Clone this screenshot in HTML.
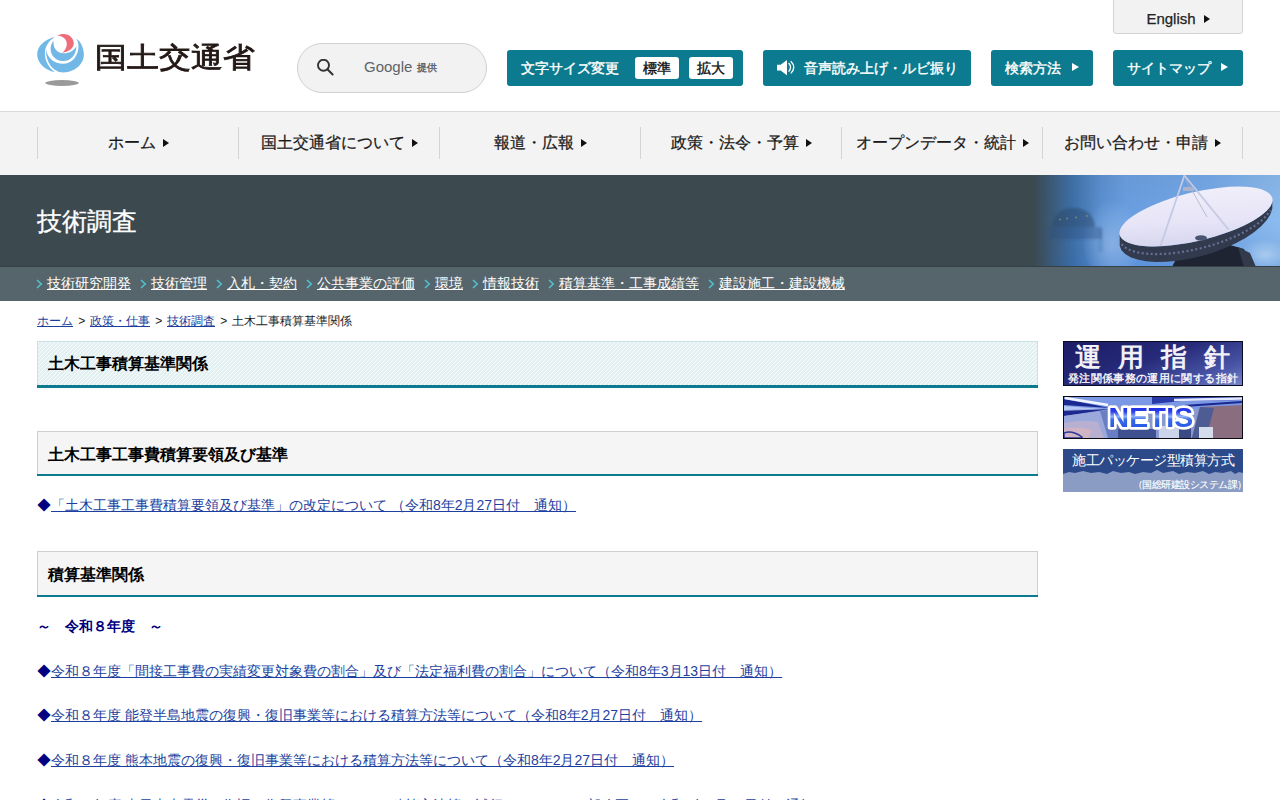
<!DOCTYPE html>
<html lang="ja">
<head>
<meta charset="utf-8">
<title>土木工事積算基準関係 - 国土交通省</title>
<style>
*{box-sizing:border-box;margin:0;padding:0}
html,body{width:1280px;height:800px;overflow:hidden;background:#fff}
body{font-family:"Liberation Sans",sans-serif;color:#1a1a1a;position:relative}
a{color:inherit}
.abs{position:absolute}
/* header */
#hdr{position:absolute;left:0;top:0;width:1280px;height:112px;background:#fff;border-bottom:1px solid #d9d9d9}
#logo{position:absolute}
#logotext{position:absolute;left:95px;top:36px;font-size:32px;line-height:42px;transform:scaleY(0.88);transform-origin:0 20.5px;color:#231815;letter-spacing:0px;white-space:nowrap;-webkit-text-stroke:0.9px #231815}
#search{position:absolute;left:297px;top:43px;width:190px;height:50px;border:1px solid #d0d0d0;border-radius:25px;background:#f2f2f2}
#search .g{position:absolute;left:66px;top:14px;font-size:15px;color:#5f6368;line-height:18px}
#search .t{position:absolute;left:119px;top:18px;font-size:10px;color:#5f6368;line-height:12px;font-weight:bold}
.btn{position:absolute;top:50px;height:36px;background:#0c7b8f;border-radius:3px;color:#fff;font-size:14px;line-height:36px;white-space:nowrap;-webkit-text-stroke:0.4px #fff}
.btn .tri{display:block;width:0;height:0;border-left:7px solid #fff;border-top:4.5px solid transparent;border-bottom:4.5px solid transparent}
.wbox{position:absolute;top:7px;width:44px;height:22px;background:#fff;border-radius:3px;color:#111;font-size:14px;line-height:22px;text-align:center;-webkit-text-stroke:0.4px #111}
#eng{position:absolute;left:1113px;top:-2px;width:130px;height:36px;background:#f2f2f2;border:1px solid #d3d3d3;border-radius:0 0 3px 3px;font-size:15px;line-height:40px;color:#222;text-align:center;-webkit-text-stroke:0.25px #222}
#eng .tri{display:inline-block;width:0;height:0;border-left:6px solid #111;border-top:4px solid transparent;border-bottom:4px solid transparent;vertical-align:middle;margin-left:8px;margin-top:-2px}
/* nav */
#nav{position:absolute;left:0;top:112px;width:1280px;height:63px;background:#f3f3f3}
.sep{position:absolute;top:15px;width:1px;height:32px;background:#d4d4d4}
.ni{position:absolute;top:0;height:63px;line-height:61px;font-size:16px;color:#1a1a1a;text-align:center;white-space:nowrap;-webkit-text-stroke:0.25px #1a1a1a}
.ni .tri{display:inline-block;width:0;height:0;border-left:6px solid #111;border-top:4px solid transparent;border-bottom:4px solid transparent;vertical-align:middle;margin-left:7px;margin-top:-2px}
/* banner */
#ban{position:absolute;left:0;top:175px;width:1280px;height:92px;background:#3c494f;overflow:hidden}
#ban h2{position:absolute;left:37px;top:29px;font-size:25px;line-height:34px;color:#fff;font-weight:normal;-webkit-text-stroke:0.3px #fff}
#sub{position:absolute;left:0;top:267px;width:1280px;height:34px;background:#56656b;white-space:nowrap;padding-left:37px;display:flex}
#sub .si{display:block;font-size:14px;line-height:32px;color:#fff;margin-right:10px;position:relative;padding-left:10px}
#sub .si a{text-decoration:underline}
#sub .chev{position:absolute;left:-0.7px;top:12px}
/* breadcrumb */
#bc{position:absolute;left:37px;top:312px;font-size:12px;line-height:18px;color:#222;white-space:nowrap}
#bc a{color:#1b3e9a;text-decoration:underline}
#bc .gt{display:inline-block;margin:0 4.8px 0 5.2px}
/* content */
.h1box{position:absolute;left:37px;top:341px;width:1001px;height:47px;border:1px solid #c9e2e6;border-bottom:3px solid #0c7b8f;border-image:none;
 background-color:#e2f0f2;background-image:linear-gradient(135deg,#fbfdfd 0,#fbfdfd 15%,#e2f0f2 15%,#e2f0f2 50%,#fbfdfd 50%,#fbfdfd 65%,#e2f0f2 65%,#e2f0f2 100%);background-size:4px 4px}
.h1box h1{position:absolute;left:10px;top:12px;font-size:16px;line-height:20px;font-weight:bold;color:#000}
.h1box::after,.h2box::after{content:"";position:absolute;left:-1px;width:1001px;bottom:-3px;height:3px;background:#0c7b8f}
.h2box::after{bottom:-2px;height:2px}
.h2box{position:absolute;left:37px;width:1001px;height:45px;border:1px solid #cfcfcf;border-bottom:2px solid #0c7b8f;background:#f5f5f5}
.h2box h2{position:absolute;left:10px;top:13px;font-size:16px;line-height:20px;font-weight:bold;color:#000}
.lk{position:absolute;left:37px;font-size:14px;line-height:18px;white-space:nowrap;color:#000080}
.lk a{color:#1d3fa0;text-decoration:underline}
#yr{position:absolute;left:37px;top:617px;font-size:14px;line-height:18px;font-weight:bold;color:#000080;white-space:pre}
/* sidebar */
.sb{position:absolute;left:1063px;width:180px;overflow:hidden}
</style>
</head>
<body>
<div id="hdr">
  <svg id="logo" viewBox="0 0 52 58" width="52" height="58" style="left:35px;top:32px">
    <g fill="#72b8e6">
    <path d="M19.9,5.1 C10,7.5 2.1,14 2.15,22.6 C2.2,31 10,38.5 19.9,40.3 C13.5,35.5 9.9,28.5 9.9,21.8 C9.9,14.5 14,8.5 19.9,5.1 Z"/>
    <path d="M11,17.2 C10.6,30 18,40.4 28.5,40.4 C40,40.4 48.9,32 48.9,22.6 C48.9,15.5 45.5,9.5 41.4,6.8 C43.3,10 44,14 43.2,18 C41.5,26 35.5,31.8 28.5,31.8 C19,31.8 12,25.5 11,17.2 Z"/>
    <path d="M18.3,8.9 C15.8,12 15.2,16 15.8,19.2 C17.3,25.5 22.5,29.1 28.5,29.1 C35.8,29.1 41.5,22.5 41.4,14 C39.3,18.7 34,21.4 28.5,21.3 C22.5,21.1 18.6,16.5 18.7,12 C18.7,11 18.6,10 18.3,8.9 Z"/>
    </g>
    <path fill="#ef6d78" d="M22,3.6 C24,2.5 26.3,1.9 28.6,1.9 C34.2,1.9 38.8,6.1 38.8,11.3 C38.8,16.3 33.3,20.4 27,20.7 C29.8,19 31.8,15.5 31.8,11.9 C31.8,7.2 27.6,3.7 22,3.6 Z"/>
    <ellipse cx="27" cy="51" rx="16.8" ry="2.9" fill="#9a9a9a"/>
  </svg>
  <div id="logotext">国土交通省</div>
  <div id="search">
    <svg class="abs" style="left:19px;top:15px" width="19" height="19" viewBox="0 0 19 19"><circle cx="6.5" cy="6.3" r="5.5" fill="none" stroke="#333" stroke-width="1.9"/><line x1="10.4" y1="10.2" x2="15.6" y2="15.5" stroke="#333" stroke-width="2" stroke-linecap="round"/></svg>
    <span class="g">Google</span><span class="t">提供</span>
  </div>
  <div class="btn" style="left:507px;width:236px"><span style="position:absolute;left:14px">文字サイズ変更</span><span class="wbox" style="left:128px">標準</span><span class="wbox" style="left:182px">拡大</span></div>
  <div class="btn" style="left:763px;width:208px"><svg class="abs" style="left:14px;top:10px" width="20" height="16" viewBox="0 0 20 16"><path d="M0 4.8 H3.6 L10 0 V15.2 L3.6 10.6 H0 Z" fill="#fff"/><path d="M11.6 3 Q15.6 7.3 11.6 11.6" fill="none" stroke="#fff" stroke-width="1.3"/><path d="M13.8 1.2 Q19.8 7.3 13.8 13.4" fill="none" stroke="#fff" stroke-width="1.3"/></svg><span style="position:absolute;left:41px">音声読み上げ・ルビ振り</span></div>
  <div class="btn" style="left:991px;width:102px"><span style="position:absolute;left:14px">検索方法</span><span class="tri" style="position:absolute;left:81px;top:13px;margin:0"></span></div>
  <div class="btn" style="left:1113px;width:130px"><span style="position:absolute;left:14px">サイトマップ</span><span class="tri" style="position:absolute;left:108px;top:13px;margin:0"></span></div>
  <div id="eng">English<span class="tri"></span></div>
</div>
<div id="nav">
  <div class="sep" style="left:37px"></div><div class="sep" style="left:238px"></div><div class="sep" style="left:439px"></div><div class="sep" style="left:640px"></div><div class="sep" style="left:841px"></div><div class="sep" style="left:1042px"></div><div class="sep" style="left:1242px"></div>
  <div class="ni" style="left:38px;width:200px">ホーム<span class="tri"></span></div>
  <div class="ni" style="left:239px;width:200px">国土交通省について<span class="tri"></span></div>
  <div class="ni" style="left:440px;width:200px">報道・広報<span class="tri"></span></div>
  <div class="ni" style="left:641px;width:200px">政策・法令・予算<span class="tri"></span></div>
  <div class="ni" style="left:842px;width:200px">オープンデータ・統計<span class="tri"></span></div>
  <div class="ni" style="left:1043px;width:199px">お問い合わせ・申請<span class="tri"></span></div>
</div>
<div id="ban">
  <svg class="abs" style="left:1000px;top:0" width="280" height="92" viewBox="0 0 280 92">
    <defs>
      <linearGradient id="sky" x1="0" y1="0" x2="1" y2="0">
        <stop offset="0" stop-color="#3c494f"/>
        <stop offset="0.12" stop-color="#3c494f"/>
        <stop offset="0.19" stop-color="#3b5c7c"/>
        <stop offset="0.26" stop-color="#3d6fa6"/>
        <stop offset="0.36" stop-color="#5a90d2"/>
        <stop offset="0.45" stop-color="#6a9fe2"/>
        <stop offset="0.75" stop-color="#74aaea"/>
        <stop offset="1" stop-color="#8cbcf0"/>
      </linearGradient>
      <linearGradient id="dish" x1="0" y1="1" x2="0.6" y2="0">
        <stop offset="0" stop-color="#cfd0ea"/>
        <stop offset="0.5" stop-color="#e6e4f6"/>
        <stop offset="1" stop-color="#f0eefa"/>
      </linearGradient>
    </defs>
    <rect x="0" y="0" width="280" height="92" fill="url(#sky)"/>
    <linearGradient id="mk" x1="0" y1="0" x2="1" y2="0"><stop offset="0.15" stop-color="#fff" stop-opacity="0"/><stop offset="0.35" stop-color="#fff" stop-opacity="1"/></linearGradient>
    <mask id="mask1"><rect x="0" y="0" width="280" height="92" fill="url(#mk)"/></mask>
    <linearGradient id="vg" x1="0" y1="0" x2="0" y2="1"><stop offset="0" stop-color="#5a6a88" stop-opacity="0.12"/><stop offset="0.5" stop-color="#5a6a88" stop-opacity="0"/><stop offset="1" stop-color="#1a5ab8" stop-opacity="0.2"/></linearGradient>
    <rect x="0" y="0" width="280" height="92" fill="url(#vg)" mask="url(#mask1)"/>
    <radialGradient id="haze" cx="0.5" cy="0.6" r="0.5"><stop offset="0" stop-color="#a8c8f0" stop-opacity="0.55"/><stop offset="1" stop-color="#a8c8f0" stop-opacity="0"/></radialGradient>
    <ellipse cx="112" cy="60" rx="30" ry="45" fill="url(#haze)"/>
    <radialGradient id="cloud" cx="0.5" cy="0.5" r="0.5"><stop offset="0" stop-color="#c8def6" stop-opacity="0.6"/><stop offset="1" stop-color="#c8def6" stop-opacity="0"/></radialGradient>
    <ellipse cx="265" cy="80" rx="25" ry="16" fill="url(#cloud)"/>
    <filter id="bl"><feGaussianBlur stdDeviation="1.2"/></filter>
    <g filter="url(#bl)"><path d="M52 52 Q54 33 73.5 33 Q93 33 95 52 Z" fill="#2a4668" opacity="0.5"/>
    <rect x="50" y="52" width="52" height="12" fill="#2a4a78" opacity="0.35"/>
    <rect x="98" y="55" width="5" height="22" fill="#3a6aa8" opacity="0.25"/></g>
    <g fill="#c8b070" opacity="0.5"><circle cx="60" cy="44.5" r="0.9"/><circle cx="67" cy="43.5" r="0.9"/><circle cx="76" cy="42.5" r="0.9"/><circle cx="87" cy="41" r="0.9"/></g>
    <path d="M178 80 L172 92 L250 92 L244 74 L230 70 Z" fill="#1e2432"/>
    <path d="M238 72 L250 78 L256 92 L244 92 Z" fill="#323a4c"/>
    <path d="M119.7 59.8 L121.5 63.3 L125.2 66.2 L130.6 68.6 L137.6 70.2 L146.0 71.2 L155.7 71.4 L166.4 70.9 L177.8 69.6 L189.7 67.7 L201.7 65.1 L213.5 62.0 L225.0 58.3 L235.7 54.2 L245.5 49.8 L254.0 45.2 L261.1 40.6 L266.6 35.9 L270.3 31.4 L272.3 27.1 L272.3 23.2 L272.3 28.2 L272.3 33.6 L270.3 39.4 L266.6 45.3 L261.1 51.3 L254.0 57.3 L245.5 63.0 L235.7 68.3 L225.0 73.1 L213.5 77.4 L201.7 80.9 L189.7 83.7 L177.8 85.7 L166.4 86.7 L155.7 86.9 L146.0 86.2 L137.6 84.6 L130.6 82.2 L125.2 79.0 L121.5 75.2 L119.7 70.8 Z" fill="#323a4e"/>
    <path d="M121.5 69.3 L125.2 72.6 L130.6 75.4 L137.6 77.4 L146.0 78.7 L155.7 79.1 L166.4 78.8 L177.8 77.6 L189.7 75.7 L201.7 73.0 L213.5 69.7 L225.0 65.7 L235.7 61.3 L245.5 56.4 L254.0 51.3 L261.1 46.0 L266.6 40.6 L270.3 35.4" fill="none" stroke="#7a88b0" stroke-width="2.2" stroke-dasharray="2 2.5" opacity="0.7"/>
    <g transform="rotate(-13.5 196 41.5)">
      <ellipse cx="196" cy="41.5" rx="78.5" ry="24.3" fill="url(#dish)"/>
    </g>
    <path d="M160.5 71 L184.4 0.5 L228.7 54.8" fill="none" stroke="#c4cae4" stroke-width="1.8"/>
    <line x1="184.4" y1="2" x2="207" y2="42" stroke="#a8b0cc" stroke-width="0.8"/>
    <rect x="183" y="12" width="11" height="4" fill="#aab2cc"/>
    <ellipse cx="201" cy="63" rx="6" ry="2.8" fill="#4a5670"/>
  </svg>
  <h2>技術調査</h2>
  <div class="abs" style="left:0;top:91px;width:1280px;height:1px;background:#344046"></div>
</div>
<div id="sub"><span class="si"><svg class="chev" width="7" height="10" viewBox="0 0 7 10"><path d="M1 1 L5.2 5 L1 9" fill="none" stroke="#4ebfcc" stroke-width="1.7"/></svg><a>技術研究開発</a></span><span class="si"><svg class="chev" width="7" height="10" viewBox="0 0 7 10"><path d="M1 1 L5.2 5 L1 9" fill="none" stroke="#4ebfcc" stroke-width="1.7"/></svg><a>技術管理</a></span><span class="si"><svg class="chev" width="7" height="10" viewBox="0 0 7 10"><path d="M1 1 L5.2 5 L1 9" fill="none" stroke="#4ebfcc" stroke-width="1.7"/></svg><a>入札・契約</a></span><span class="si"><svg class="chev" width="7" height="10" viewBox="0 0 7 10"><path d="M1 1 L5.2 5 L1 9" fill="none" stroke="#4ebfcc" stroke-width="1.7"/></svg><a>公共事業の評価</a></span><span class="si"><svg class="chev" width="7" height="10" viewBox="0 0 7 10"><path d="M1 1 L5.2 5 L1 9" fill="none" stroke="#4ebfcc" stroke-width="1.7"/></svg><a>環境</a></span><span class="si"><svg class="chev" width="7" height="10" viewBox="0 0 7 10"><path d="M1 1 L5.2 5 L1 9" fill="none" stroke="#4ebfcc" stroke-width="1.7"/></svg><a>情報技術</a></span><span class="si"><svg class="chev" width="7" height="10" viewBox="0 0 7 10"><path d="M1 1 L5.2 5 L1 9" fill="none" stroke="#4ebfcc" stroke-width="1.7"/></svg><a>積算基準・工事成績等</a></span><span class="si"><svg class="chev" width="7" height="10" viewBox="0 0 7 10"><path d="M1 1 L5.2 5 L1 9" fill="none" stroke="#4ebfcc" stroke-width="1.7"/></svg><a>建設施工・建設機械</a></span></div>
<div id="bc"><a>ホーム</a><span class="gt">&gt;</span><a>政策・仕事</a><span class="gt">&gt;</span><a>技術調査</a><span class="gt">&gt;</span>土木工事積算基準関係</div>

<div class="h1box"><h1>土木工事積算基準関係</h1></div>
<div class="h2box" style="top:431px"><h2>土木工事工事費積算要領及び基準</h2></div>
<div class="lk" style="top:496px">◆<a>「土木工事工事費積算要領及び基準」の改定について （令和8年2月27日付　通知）</a></div>
<div class="h2box" style="top:551px;height:46px"><h2>積算基準関係</h2></div>
<div id="yr">～　令和８年度　～</div>
<div class="lk" style="top:662px">◆<a>令和８年度「間接工事費の実績変更対象費の割合」及び「法定福利費の割合」について（令和8年3月13日付　通知）</a></div>
<div class="lk" style="top:706px">◆<a>令和８年度 能登半島地震の復興・復旧事業等における積算方法等について（令和8年2月27日付　通知）</a></div>
<div class="lk" style="top:751px">◆<a>令和８年度 熊本地震の復興・復旧事業等における積算方法等について（令和8年2月27日付　通知）</a></div>
<div class="lk" style="top:796px">◆<a>令和８年度 東日本大震災の復旧・復興事業等における積算方法等の試行について（一部改正）（令和8年2月27日付　通知）</a></div>

<div class="sb" style="top:341px;height:45px;border:1px solid #0a0a20;background:linear-gradient(160deg,#1c1c66 0%,#262a78 45%,#4a56a8 80%,#7884c8 100%)">
  <div class="abs" style="left:11px;top:0px;font-size:26px;line-height:30px;font-weight:bold;color:#f0f0f6;letter-spacing:17px;white-space:nowrap">運用指針</div>
  <div class="abs" style="left:4px;top:30px;font-size:11px;line-height:12px;color:#f0f0f6;letter-spacing:0.35px;white-space:nowrap;font-weight:bold">発注関係事務の運用に関する指針</div>
</div>
<div class="sb" style="top:396px;height:43px;border:1px solid #0a0a10">
  <svg width="178" height="41" viewBox="0 0 178 41" style="display:block">
    <defs>
      <linearGradient id="ntx" x1="0" y1="0" x2="0" y2="1">
        <stop offset="0" stop-color="#1010dc"/><stop offset="0.35" stop-color="#2a40e8"/><stop offset="0.5" stop-color="#90b0f8"/><stop offset="0.6" stop-color="#3868e8"/><stop offset="1" stop-color="#2050e0"/>
      </linearGradient>
    </defs>
    <rect width="178" height="41" fill="#8898d0"/>
    <path d="M0 0 H178 V12 H0 Z" fill="#7a98e4"/>
    <path d="M0 2 L46 11 L0 8 Z" fill="#1a2890"/>
    <path d="M0 14 L46 12 L0 19 Z" fill="#1a2890"/>
    <path d="M0 9 L40 12 L0 13 Z" fill="#b8c8f4"/>
    <path d="M1 1 L44 8" stroke="#f4f6ff" stroke-width="2.6"/>
    <path d="M0 19 L46 13 L60 41 L0 41 Z" fill="#9aa8dc"/>
    <path d="M0 26 Q20 22 34 25 L40 41 L0 41 Z" fill="#b8b0d0"/>
    <path d="M0 32 Q15 29 28 33 L24 41 L0 41 Z" fill="#d0b4c4"/>
    <path d="M0 36 Q8 33 18 40 L17 41 L0 41 Z" fill="none" stroke="#2a3a9a" stroke-width="1.5"/>
    <path d="M36 14 L46 13 L62 41 L44 41 Z" fill="#6a7ec4"/>
    <path d="M54 32 H92 V41 H54 Z" fill="#3e5090"/>
    <path d="M88 0 H178 V3 L118 4 L88 7 Z" fill="#2a3aa8"/>
    <path d="M110 3 L178 1.5" stroke="#e0e8ff" stroke-width="2.5"/>
    <path d="M120 9 L178 5" stroke="#1a2890" stroke-width="2"/>
    <path d="M128 41 L136 10 L178 8 V41 Z" fill="#8a6e80"/>
    <path d="M128 41 L136 10 L150 11 L142 41 Z" fill="#4e5c94"/>
    <path d="M95 29 H115 V41 H95 Z" fill="#ccd4ea"/>
    <path d="M115 29 H127 V41 H115 Z" fill="#3a4a84"/>
    <path d="M135 30 H149 V41 H135 Z" fill="#d4dcec"/>
    <text x="44.5" y="29.5" font-family="Liberation Sans" font-weight="bold" font-size="28.4" letter-spacing="0.3" fill="url(#ntx)" stroke="#fff" stroke-width="5.5" stroke-linejoin="round" paint-order="stroke" style="filter:drop-shadow(0.8px 0.8px 0.6px rgba(0,0,40,0.55))">NETIS</text>
  </svg>
</div>
<div class="sb" style="top:449px;height:43px;background:#8a9bc4">
  <svg class="abs" style="left:0;top:0" width="180" height="43" viewBox="0 0 180 43"><path d="M0 0 H180 V24 L176 23 L172 25 L168 22 L160 24 L152 23 L146 25 L140 22 L132 24 L124 23 L116 25 L110 22 L100 24 L94 21 L88 24 L80 23 L72 25 L66 23 L58 24 L50 22 L44 25 L36 23 L28 24 L20 22 L12 24 L6 23 L0 25 Z" fill="#2c4a8a"/></svg>
  <div class="abs" style="left:9px;top:3px;font-size:14px;line-height:16px;color:#fff;white-space:nowrap;letter-spacing:-0.5px">施工パッケージ型積算方式</div>
  <div class="abs" style="left:70px;top:30px;font-size:9.5px;line-height:11px;color:#fff;white-space:nowrap;letter-spacing:-0.55px;-webkit-text-stroke:0.15px #fff">（国総研建設システム課）</div>
</div>
</body>
</html>
